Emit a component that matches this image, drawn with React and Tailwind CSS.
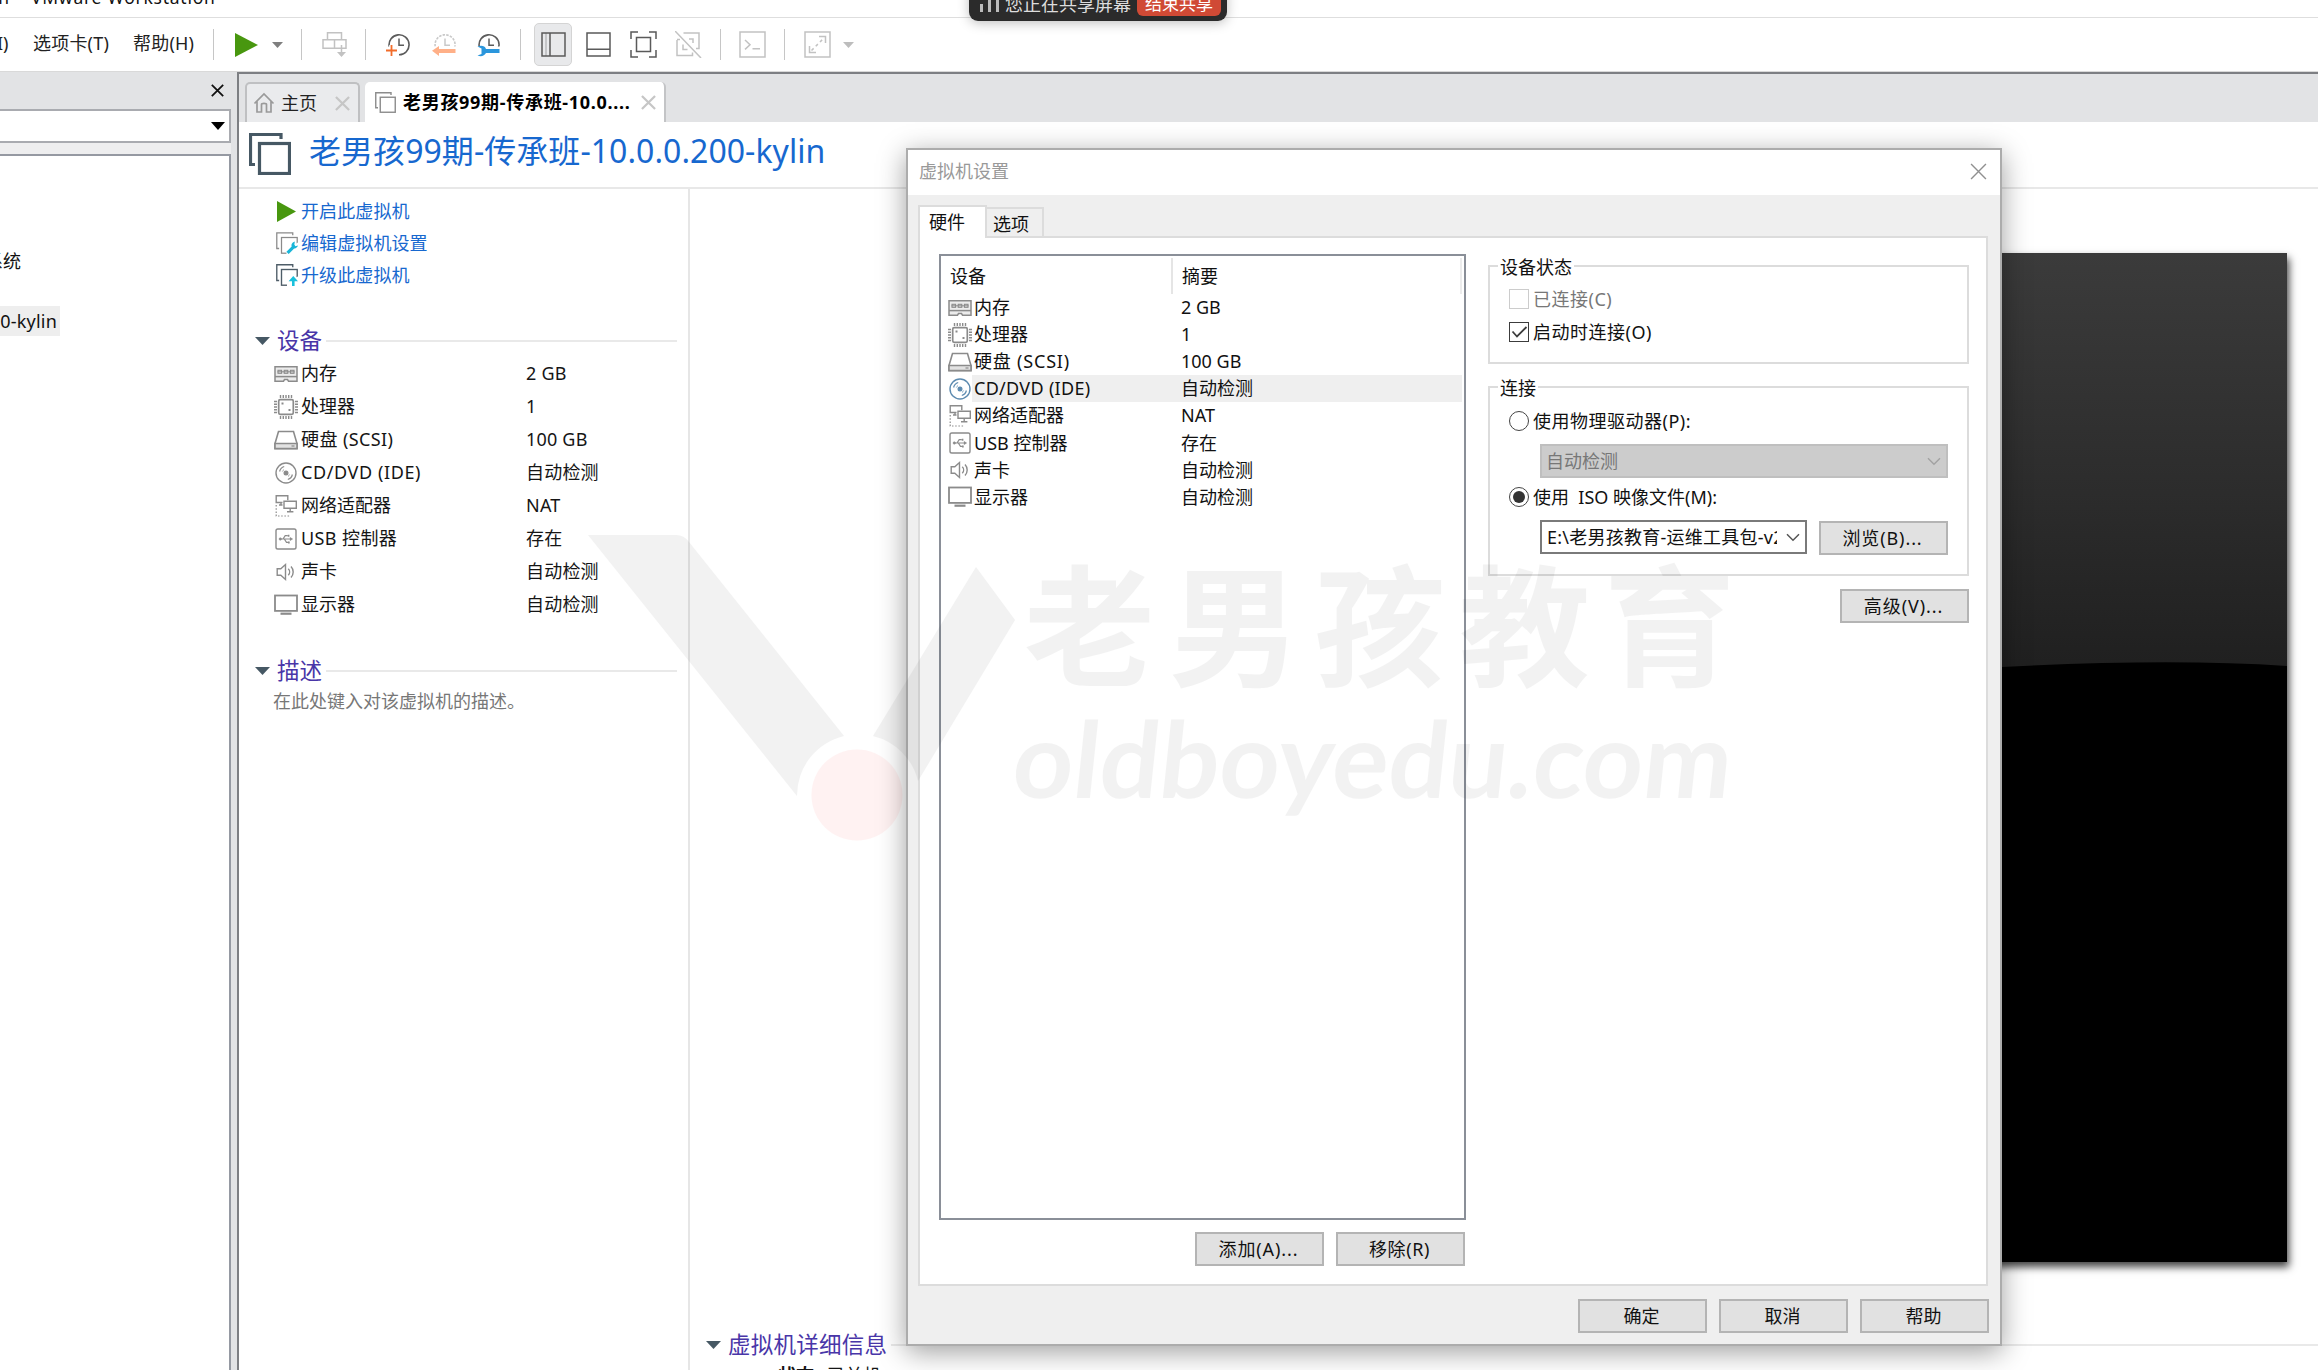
import React from "react";

const GRAY = "#8b8b8b";

/* ---------- device icons (24 x 24 box) ---------- */
function MemoryIcon() {
  return (
    <svg width="24" height="24" viewBox="0 0 24 24" fill="none" stroke={GRAY} strokeWidth="1.5">
      <path d="M1 4.7h22v14.5h-8.5l-1-1.6h-3l-1 1.6H1z" fill="#ececec" />
      <path d="M1 14.6h22" />
      <rect x="4" y="8.3" width="3.6" height="3" strokeWidth="1.1" />
      <rect x="10.2" y="8.3" width="3.6" height="3" strokeWidth="1.1" />
      <rect x="16.4" y="8.3" width="3.6" height="3" strokeWidth="1.1" />
      <path d="M3.5 9.8h17" strokeWidth="1" />
    </svg>
  );
}
function CpuIcon() {
  return (
    <svg width="24" height="24" viewBox="0 0 24 24" fill="none" stroke={GRAY} strokeWidth="1.4">
      <rect x="4.7" y="4.7" width="14.6" height="14.6" rx="1.5" strokeWidth="1.7" />
      <path d="M6.5 0v3M9.3 0v3M12 0v3M14.7 0v3M17.5 0v3M6.5 21v3M9.3 21v3M12 21v3M14.7 21v3M17.5 21v3M0 6.5h3M0 9.3h3M0 12h3M0 14.7h3M0 17.5h3M21 6.5h3M21 9.3h3M21 12h3M21 14.7h3M21 17.5h3" />
      <path d="M7.5 8.5h2M14.5 15h2" strokeWidth="2" />
    </svg>
  );
}
function DiskIcon() {
  return (
    <svg width="24" height="24" viewBox="0 0 24 24" fill="none" stroke={GRAY} strokeWidth="1.6">
      <path d="M1 15.5 4.5 3.5h15L23 15.5v5.2H1z" />
      <path d="M1 15.5h22v5H1z" fill="#e2e2e2" />
      <path d="M17.5 18h3" strokeWidth="1.2" />
    </svg>
  );
}
function DiscIcon({ blue }) {
  const c = blue ? "#5d8bb0" : GRAY;
  return (
    <svg width="24" height="24" viewBox="0 0 24 24" fill="none" stroke={c} strokeWidth="1.4">
      <circle cx="12" cy="12" r="10" />
      <circle cx="12" cy="12" r="1.9" fill={c} strokeWidth="1.2" />
      <path d="M5.6 10.5a6.8 6.8 0 0 1 4.6-5M18.4 13.5a6.8 6.8 0 0 1-4.6 5" strokeWidth="1.2" />
      <path d="M8.4 10.5a4 4 0 0 1 1.5-1.9M15.6 13.5a4 4 0 0 1-1.5 1.9" strokeWidth="0.8" />
    </svg>
  );
}
function NetIcon() {
  return (
    <svg width="24" height="24" viewBox="0 0 24 24" fill="none" stroke={GRAY} strokeWidth="1.4">
      <path d="M8.5 8.5H2.2V1.8h11.6v4.5M5 11h3.5M7 8.5v2.5" />
      <path d="M10 7.3h12.3v7H10zM16.2 14.3v3M13 17.7h6.4" />
      <path d="M2.2 11v11h14" strokeDasharray="1.5 1.7" strokeWidth="1.2" />
    </svg>
  );
}
function UsbIcon() {
  return (
    <svg width="24" height="24" viewBox="0 0 24 24" fill="none" stroke={GRAY} strokeWidth="1.4">
      <rect x="2" y="2" width="20" height="20" rx="1.8" />
      <path d="M6.5 12h11M9 12l2.2-3.3h2.6M10.3 12l2.2 3.4h2" strokeWidth="1.2" />
      <circle cx="6.3" cy="12" r="1.2" fill={GRAY} strokeWidth="0.5" />
      <path d="M16 10.3 18.8 12 16 13.7z" fill={GRAY} strokeWidth="0.3" />
      <path d="M13.8 8.7h1.6M14 15.4h1.7" strokeWidth="2" />
    </svg>
  );
}
function SoundIcon() {
  return (
    <svg width="24" height="24" viewBox="0 0 24 24" fill="none" stroke={GRAY} strokeWidth="1.4">
      <path d="M3.2 8.7h3.6l4.7-4.2v15l-4.7-4.2H3.2z" />
      <path d="M14.3 8.8a4.6 4.6 0 0 1 0 6.4M17 6.5a8 8 0 0 1 0 11" />
    </svg>
  );
}
function MonitorIcon() {
  return (
    <svg width="24" height="24" viewBox="0 0 24 24" fill="none" stroke={GRAY} strokeWidth="1.8">
      <rect x="1" y="2.5" width="22" height="15.4" />
      <path d="M6.5 20.7h11" strokeWidth="2.2" />
    </svg>
  );
}

const DEVICES = [
  { name: "内存", value: "2 GB", Icon: MemoryIcon, track: "" },
  { name: "处理器", value: "1", Icon: CpuIcon, track: "" },
  { name: "硬盘 (SCSI)", value: "100 GB", Icon: DiskIcon, track: "tracking-[0.4px]" },
  { name: "CD/DVD (IDE)", value: "自动检测", Icon: DiscIcon, track: "tracking-[0.6px]" },
  { name: "网络适配器", value: "NAT", Icon: NetIcon, track: "" },
  { name: "USB 控制器", value: "存在", Icon: UsbIcon, track: "tracking-[0.4px]" },
  { name: "声卡", value: "自动检测", Icon: SoundIcon, track: "" },
  { name: "显示器", value: "自动检测", Icon: MonitorIcon, track: "" },
];

/* ---------- general icons ---------- */
function Caret({ w = 11, h = 6, color = "#7f7f7f" }) {
  return (
    <svg width={w} height={h} viewBox="0 0 12 6" preserveAspectRatio="none" className="block">
      <path d="M0 0h12L6 6z" fill={color} />
    </svg>
  );
}
function Cross({ size, color, width }) {
  return (
    <svg width={size} height={size} viewBox="0 0 16 16" className="block">
      <path d="M1 1l14 14M15 1 1 15" stroke={color} strokeWidth={width} />
    </svg>
  );
}
function Play({ w, h }) {
  return (
    <svg width={w} height={h} viewBox="0 0 20 20" preserveAspectRatio="none" className="block">
      <path d="M0 0 20 10 0 20z" fill="#48970f" />
    </svg>
  );
}
function Pages({ size, color, width, children }) {
  return (
    <svg width={size} height={size} viewBox="0 0 42 42" fill="none" stroke={color} strokeWidth={width} className="block">
      <path d="M6 31.5H1.5v-30h30.5v4.5" />
      <rect x="10.5" y="10.5" width="30" height="30" />
      {children}
    </svg>
  );
}
function Clock({ color = "#5b5b5b", dash, children }) {
  return (
    <svg width="24" height="26" viewBox="0 0 24 26" fill="none" className="block">
      <path d="M3.2 14.5A10 10 0 1 1 13 22.8" stroke={color} strokeWidth="1.6" strokeDasharray={dash} />
      <path d="M13 6.5v6.7h5" stroke={color} strokeWidth="1.5" />
      {children}
    </svg>
  );
}
function Chevron({ color }) {
  return (
    <svg width="14" height="9" viewBox="0 0 14 9" fill="none" className="block">
      <path d="M1 1.2l6 6 6-6" stroke={color} strokeWidth="1.5" />
    </svg>
  );
}
function Separator({ className = "" }) {
  return <div className={`h-[31px] w-px shrink-0 bg-[#c6c6c6] ${className}`} />;
}

function TopBar() {
  return (
    <header className="h-[71px] shrink-0 bg-white">
      <div className="flex h-[18px] border-b border-[#dedede]">
        <div className="-mt-[15px] ml-[-34px] whitespace-pre text-[17.5px] leading-[24px] text-[#111]">
          <span className="inline-block w-[43px] text-right">ation</span>
          <span className="ml-[22px] tracking-[0.75px]">VMware Workstation</span>
        </div>
      </div>
      <div className="flex h-[53px] items-center">
        <div className="-mt-[4px] flex text-[18px] leading-[24px] text-[#222]">
          <span className="w-[33px]">
            <span className="-ml-[3px]">I)</span>
          </span>
          <span className="w-[100px] tracking-[0.2px]">选项卡(T)</span>
          <span className="w-[80px] tracking-[0.2px]">帮助(H)</span>
        </div>
        <Separator />
        <div className="ml-[21px]"><Play w={23} h={24} /></div>
        <div className="ml-[14px]"><Caret /></div>
        <Separator className="ml-[18px]" />
        <svg width="25" height="27" viewBox="0 0 25 27" fill="none" stroke="#c2c2c2" strokeWidth="1.5" className="ml-[20px] shrink-0">
          <path d="M5.5 8.5V1.8h14v6.7M1 8.8h23v8.4H1zM12.5 8.8v8.4M19.5 14v11" />
          <path d="M15 21l4.5 5 4.5-5z" fill="#c2c2c2" stroke="none" />
        </svg>
        <Separator className="ml-[18px]" />
        <div className="ml-[20px]">
          <Clock>
            <path d="M0 18.5h11M5.5 13v11.5" stroke="#fff" strokeWidth="4.5" />
            <path d="M0 18.5h11M5.5 13v11" stroke="#f26c2a" strokeWidth="1.8" />
          </Clock>
        </div>
        <div className="ml-[22px]">
          <Clock color="#c9c9c9" dash="2.5 1.2">
            <path d="M0 14.5h24v11H0z" fill="#fff" />
            <path d="M0 18.7 7 14v3h16.5v4H7v3z" fill="#ffb088" />
          </Clock>
        </div>
        <div className="ml-[20px]">
          <Clock>
            <path d="M0 14.5h24v11H0z" fill="#fff" />
            <path d="M1.5 14.5c4-1.5 7.5-.5 8.5 2.500h13.500v4H10c-1.500 3-5 4-8.500 2.500l4-1.500v-5.500z" fill="#2a96dc" />
          </Clock>
        </div>
        <Separator className="ml-[20px]" />
        <div className="ml-[13px] flex h-[43px] w-[38px] items-center justify-center rounded-[5px] border border-[#d4d4d4] bg-[#e8e9eb]">
          <svg width="25" height="25" viewBox="0 0 25 25" fill="none" stroke="#5a5a5a" strokeWidth="1.5">
            <path d="M1 1h23v23H1zM9 1v23" />
            <path d="M5 1v23" strokeWidth=".5" />
          </svg>
        </div>
        <svg width="25" height="25" viewBox="0 0 25 25" fill="none" stroke="#5a5a5a" strokeWidth="1.5" className="ml-[14px] shrink-0">
          <path d="M1 1h23v23H1zM1 17.2h23" />
        </svg>
        <svg width="27" height="27" viewBox="0 0 27 27" fill="none" stroke="#5a5a5a" strokeWidth="1.5" className="ml-[19px] shrink-0">
          <path d="M1 8V1h7M19 1h7v7M26 19v7h-7M8 26H1v-7" />
          <rect x="6.5" y="6.5" width="14" height="14" />
        </svg>
        <svg width="27" height="27" viewBox="0 0 27 27" fill="none" stroke="#c2c2c2" strokeWidth="1.5" className="ml-[18px] shrink-0">
          <path d="M8.5 2H24v15.5h-3M2 9v15.5h15.5v-3M2 8.5h3M14 8h4v4M8 13.5v5h4.5M0 0l26 27" />
        </svg>
        <Separator className="ml-[18px]" />
        <svg width="27" height="27" viewBox="0 0 27 27" fill="none" stroke="#c2c2c2" strokeWidth="1.5" className="ml-[18px] shrink-0">
          <path d="M1 1h25v25H1z" />
          <path d="M6 9l5 4.7-5 4.7M13.5 17.8h7.5" />
        </svg>
        <Separator className="ml-[18px]" />
        <svg width="27" height="27" viewBox="0 0 27 27" fill="none" stroke="#c2c2c2" strokeWidth="1.5" className="ml-[19px] shrink-0">
          <path d="M1 1h25v25H1z" />
          <path d="M15 5.5h6.5V12M5.5 15v6.5H12" />
          <path d="M7.5 19.5l12-12" strokeDasharray="3 3" />
        </svg>
        <div className="ml-[12px]"><Caret color="#bdbdbd" /></div>
      </div>
    </header>
  );
}

function Library() {
  return (
    <aside className="flex w-[237px] shrink-0 flex-col bg-[#e2e3e5] pr-[6px]">
      <div className="flex h-[37px] items-center justify-end pr-[7px]">
        <Cross size={13} color="#111" width={2.2} />
      </div>
      <div className="flex h-[34px] items-center justify-end border-y-2 border-r-2 border-[#a9abb0] bg-white pr-[4px]">
        <Caret w={14} h={8} color="#000" />
      </div>
      <div className="h-[11px] bg-[#eeeeef]" />
      <div className="flex-1 border-r-2 border-t-2 border-[#9599a2] bg-white text-[18px] leading-[30px] text-[#111]">
        <div className="-ml-[15px] mt-[90px] h-[30px]">系统</div>
        <div className="mt-[30px] flex h-[30px] w-[60px] items-center justify-end bg-[#eeeeee] pr-[3px]">
          <span className="whitespace-nowrap tracking-[0.2px]">0-kylin</span>
        </div>
      </div>
    </aside>
  );
}

function SectionTitle({ children, className }) {
  return (
    <div className={`flex items-center text-[22.5px] leading-[30px] text-[#4936a8] ${className}`}>
      <Caret w={15} h={8} color="#465864" />
      <span className="ml-[7px]">{children}</span>
      <div className="ml-[4px] h-[2px] flex-1 bg-[#e9e9e9]" />
    </div>
  );
}

function Summary() {
  return (
    <div className="h-full w-[451px] shrink-0 border-r-2 border-[#e6e6e6] pt-[6px]">
      <div className="pl-[37px] text-[18px] leading-[32px] tracking-[0.1px] text-[#1768cf]">
        <div className="flex h-[32px] items-center">
          <div className="w-[25px] pl-[1px]"><Play w={19} h={21} /></div>开启此虚拟机
        </div>
        <div className="flex h-[32px] items-center">
          <div className="w-[25px]">
            <Pages size={22} color="#8a8a8a" width={2.4}>
              <path d="M20 42V28h8l14-8v22z" fill="#fff" stroke="none" />
              <path d="M22 40l11-11" stroke="#19b5d8" strokeWidth="6" />
              <path d="M36 18c-6 2-8 7-5 11s9 3 11-3l-5 1-2-3z" fill="#19b5d8" stroke="none" />
            </Pages>
          </div>
          编辑虚拟机设置
        </div>
        <div className="flex h-[31px] items-center">
          <div className="w-[25px]">
            <Pages size={22} color="#4e5d68" width={2.6}>
              <path d="M21 42V30h5l16-6v18z" fill="#fff" stroke="none" />
              <path d="M33 43V30" stroke="#19c0dc" strokeWidth="5" />
              <path d="M24 33l9-10 9 10z" fill="#19c0dc" stroke="none" />
            </Pages>
          </div>
          升级此虚拟机
        </div>
      </div>
      <SectionTitle className="ml-[16px] mr-[11px] mt-[36px]">设备</SectionTitle>
      <div className="mt-px text-[18px] text-[#151515]">
        {DEVICES.map(({ name, value, Icon, track }) => (
          <div key={name} className="flex h-[33px] items-center">
            <div className="ml-[35px] w-[27px] shrink-0"><Icon /></div>
            <span className={`w-[225px] ${track}`}>{name}</span>
            <span className="tracking-[0.2px]">{value}</span>
          </div>
        ))}
      </div>
      <SectionTitle className="ml-[16px] mr-[11px] mt-[35px]">描述</SectionTitle>
      <p className="ml-[34px] text-[18px] leading-[30px] text-[#777]">在此处键入对该虚拟机的描述。</p>
    </div>
  );
}

function Workspace() {
  return (
    <main className="flex min-w-0 flex-1 flex-col border-l-2 border-t-2 border-[#7d7f83] bg-white">
      <div className="flex h-[48px] items-end bg-[#e2e3e5] pl-[6px]">
        <div className="flex h-[40px] w-[115px] items-center rounded-t-[5px] border-2 border-b-0 border-[#bfc0c2] bg-[#eaebed] pl-[6px] text-[18px] text-[#222]">
          <svg width="22" height="22" viewBox="0 0 22 22" fill="none" stroke="#9a9a9a" strokeWidth="1.7">
            <path d="M1.5 11.5 11 2l9.5 9.500M4 9.500V20h4.500v-7.500c0-1.500 5-1.500 5 0V20H18V9.500" />
          </svg>
          <span className="ml-[6px] w-[54px]">主页</span>
          <Cross size={15} color="#c6c6c6" width={2.4} />
        </div>
        <div className="ml-[5px] flex h-[40px] w-[301px] items-center rounded-t-[5px] border-r-2 border-[#c3c4c6] bg-white pl-[10px]">
          <Pages size={21} color="#8c8c8c" width={2.8} />
          <span className="ml-[7px] w-[238px] whitespace-nowrap text-[18px] font-bold tracking-[0.7px] text-black">老男孩99期-传承班-10.0....</span>
          <Cross size={15} color="#c6c6c6" width={2.4} />
        </div>
      </div>
      <div className="flex h-[67px] shrink-0 items-center border-b-2 border-[#e8e8e8] pl-[10px]">
        <div className="-mt-px"><Pages size={42} color="#465864" width={3.2} /></div>
        <h1 className="-mt-[8px] ml-[18px] whitespace-nowrap text-[32px] leading-[44px] tracking-[0.05px] text-[#1768cf]">老男孩99期-传承班-10.0.0.200-kylin</h1>
      </div>
      <div className="flex min-h-0 flex-1">
        <Summary />
        <div className="flex min-w-0 flex-1 flex-col pt-[64px]">
          <div className="ml-[311px] h-[1009px] w-[1286px] shrink-0 bg-black shadow-[2px_5px_8px_rgba(0,0,0,0.75)]">
            <svg width="1286" height="1009" viewBox="0 0 1286 1009" className="block">
              <defs>
                <linearGradient id="glow" x1="0" y1="0" x2="0" y2="1">
                  <stop offset="0" stopColor="#3b3b3b" />
                  <stop offset="0.5" stopColor="#2c2c2c" />
                  <stop offset="1" stopColor="#1b1b1b" />
                </linearGradient>
              </defs>
              <path d="M0 0H1286V413Q1170 405 1001 414L0 480z" fill="url(#glow)" />
            </svg>
          </div>
          <SectionTitle className="ml-[16px] mt-[68px] shrink-0 tracking-[0.25px]">虚拟机详细信息</SectionTitle>
          <div className="ml-[88px] mt-[3px] flex shrink-0 text-[18px] leading-[24px] text-[#151515]">
            <span className="w-[49px] font-bold">状态</span>
            <span>已关机</span>
          </div>
        </div>
      </div>
    </main>
  );
}

function Button({ children, className = "" }) {
  return (
    <button className={`flex h-[34px] w-[129px] shrink-0 items-center justify-center border-2 border-[#b4b4b4] bg-[#e1e1e1] pr-[2px] text-[18px] leading-none text-[#111] ${className}`}>
      {children}
    </button>
  );
}

function Check({ checked }) {
  return (
    <span className={`flex size-[20px] items-center justify-center border-[1.5px] bg-white ${checked ? "border-[#3c3c3c]" : "border-[#cccccc]"}`}>
      {checked && (
        <svg width="17" height="14" viewBox="0 0 17 14" fill="none">
          <path d="M1.5 6.5 6 11.5 15.5 2" stroke="#3c3c3c" strokeWidth="1.8" />
        </svg>
      )}
    </span>
  );
}
function Radio({ checked }) {
  return (
    <span className="flex size-[20px] items-center justify-center rounded-full border-[1.5px] border-[#444] bg-white">
      {checked && <span className="size-[12px] rounded-full bg-[#333]" />}
    </span>
  );
}

function SettingsDialog() {
  return (
    <section className="absolute left-[906px] top-[148px] flex h-[1198px] w-[1096px] flex-col border-2 border-[#acacac] bg-[#efefef] text-[18px] text-[#111] shadow-[0_6px_26px_rgba(0,0,0,0.38)]">
      <div className="flex h-[45px] shrink-0 items-center justify-between bg-white pb-[3px] pl-[11px] pr-[13px]">
        <span className="text-[#999]">虚拟机设置</span>
        <Cross size={17} color="#909090" width={1.3} />
      </div>
      <div className="ml-[10px] mt-[11px] flex h-[30px] shrink-0 items-end">
        <div className="relative z-10 -mb-[2px] flex h-[33px] w-[69px] items-start border-2 border-b-0 border-[#dcdcdc] bg-white pl-[9px] pt-[3px] leading-[24px]">硬件</div>
        <div className="flex h-[29px] w-[57px] items-center border-2 border-b-0 border-l-0 border-[#dcdcdc] pl-[6px] pt-[3px]">选项</div>
      </div>
      <div className="ml-[10px] flex h-[1050px] w-[1070px] shrink-0 border-2 border-[#dcdcdc] bg-white">
        <div className="w-[546px] shrink-0 pl-[19px] pt-[16px]">
          <div className="h-[966px] w-[527px] border-2 border-[#8a8f98] bg-white">
            <div className="flex h-[38px] text-[18px]">
              <div className="mt-[2px] flex h-[36px] w-[232px] items-center border-r-2 border-[#e5e5e5] pl-[9px] pt-px">设备</div>
              <div className="mt-[2px] flex h-[36px] w-[289px] items-center border-r-2 border-[#ececec] pl-[9px] pt-px">摘要</div>
            </div>
            {DEVICES.map(({ name, value, Icon, track }, i) => (
              <div key={name} className="flex h-[27.1px] items-center pl-[7px]">
                <div className="w-[24px] shrink-0"><Icon blue={i === 3} /></div>
                <div className={`flex h-full w-[490px] items-center pl-[2px] ${i === 3 ? "bg-[#efefef]" : ""}`}>
                  <span className={`w-[207px] ${i === 2 ? "tracking-[0.8px]" : i === 3 ? "tracking-[0.3px]" : i === 5 ? "" : track}`}>{name}</span>
                  <span>{value}</span>
                </div>
              </div>
            ))}
          </div>
          <div className="mt-[12px] flex w-[526px] justify-end gap-[12px]">
            <Button className="tracking-[0.9px]">添加(A)...</Button>
            <Button className="tracking-[0.6px]">移除(R)</Button>
          </div>
        </div>
        <div className="ml-[22px] flex w-[481px] flex-col pt-[27px]">
          <div className="h-[99px] border-2 border-[#dcdcdc] leading-[22px]">
            <div className="-mt-[11px] ml-[8px] w-fit bg-white px-[2px]">设备状态</div>
            <div className="ml-[19px] mt-[10px] flex items-center gap-[4px] tracking-[0.5px] text-[#777]"><Check />已连接(C)</div>
            <div className="ml-[19px] mt-[11px] flex items-center gap-[4px] tracking-[0.5px]"><Check checked />启动时连接(O)</div>
          </div>
          <div className="mt-[22px] h-[190px] border-2 border-[#dcdcdc] leading-[22px]">
            <div className="-mt-[11px] ml-[8px] w-fit bg-white px-[2px]">连接</div>
            <div className="ml-[19px] mt-[11px] flex items-center gap-[4px] tracking-[0.5px]"><Radio />使用物理驱动器(P):</div>
            <div className="ml-[50px] mt-[12px] flex h-[34px] w-[408px] items-center justify-between border-2 border-[#bfbfbf] bg-[#cccccc] pl-[4px] pr-[5px] text-[#777]">
              自动检测<Chevron color="#a3a3a3" />
            </div>
            <div className="ml-[19px] mt-[8px] flex items-center gap-[4px]"><Radio checked /><span>使用&nbsp; ISO 映像文件(M):</span></div>
            <div className="ml-[50px] mt-[12px] flex">
              <div className="flex h-[34px] w-[267px] items-center justify-between border-2 border-[#7a7a7a] bg-white pl-[5px] pr-[5px]">
                <span className="w-[230px] overflow-hidden whitespace-nowrap tracking-[0.25px]">E:\老男孩教育-运维工具包-v2</span>
                <Chevron color="#555" />
              </div>
              <Button className="ml-[12px] mt-px tracking-[0.9px]">浏览(B)...</Button>
            </div>
          </div>
          <Button className="mt-[13px] self-end tracking-[0.9px]">高级(V)...</Button>
        </div>
      </div>
      <div className="mt-[13px] flex justify-end gap-[12px] pr-[11px]">
        <Button>确定</Button>
        <Button>取消</Button>
        <Button>帮助</Button>
      </div>
    </section>
  );
}

function ShareBanner() {
  return (
    <div className="absolute left-[969px] top-[-20px] flex h-[41px] w-[258px] rounded-[9px] bg-[#2b2b2b] pl-[11px] pt-[13px] shadow-[0_2px_12px_rgba(0,0,0,0.25)]">
      <div className="flex h-[19px] w-[25px] items-end gap-[5px]">
        <i className="h-[8px] w-[3px] bg-[#bbb]" />
        <i className="h-[14px] w-[3px] bg-[#bbb]" />
        <i className="h-[19px] w-[3px] bg-[#bbb]" />
      </div>
      <span className="w-[132px] whitespace-nowrap text-[18px] leading-[22px] text-[#ddd]">您正在共享屏幕</span>
      <span className="-mt-[6px] flex h-[29px] w-[84px] items-center justify-center rounded-[6px] bg-[#d04a35] pt-[3px] text-[17px] leading-none text-white">结束共享</span>
    </div>
  );
}

function Watermark() {
  return (
    <div className="pointer-events-none absolute left-[580px] top-[520px] h-[340px] w-[1180px] select-none text-black opacity-[0.048]">
      <svg width="450" height="340" viewBox="580 520 450 340" className="absolute left-0 top-0">
        <path d="M588 535H676Q684 535 689 542L844 736A61 61 0 0 0 797 796z" />
        <path d="M976 567L1015 620 918 781A61 61 0 0 0 873 736z" />
        <circle cx="857" cy="795" r="45.5" fill="#f00" />
      </svg>
      <div className="absolute left-[444px] top-[40px] whitespace-nowrap text-[131px] font-bold leading-[130px] tracking-[14px]">老男孩教育</div>
      <div className="absolute left-[434px] top-[172px] -skew-x-6 whitespace-nowrap font-[Lato] text-[105.5px] font-bold leading-[130px]">oldboyedu.com</div>
    </div>
  );
}

export default function App() {
  return (
    <div className="relative flex h-[1370px] w-[2318px] flex-col overflow-hidden bg-white font-['Noto_Sans','Noto_Sans_CJK_SC',sans-serif]">
      <TopBar />
      <div className="flex min-h-0 flex-1 border-t-[1px] border-[#d9d9d9] bg-[#e2e3e5]">
        <Library />
        <Workspace />
      </div>
      <SettingsDialog />
      <ShareBanner />
      <Watermark />
    </div>
  );
}
